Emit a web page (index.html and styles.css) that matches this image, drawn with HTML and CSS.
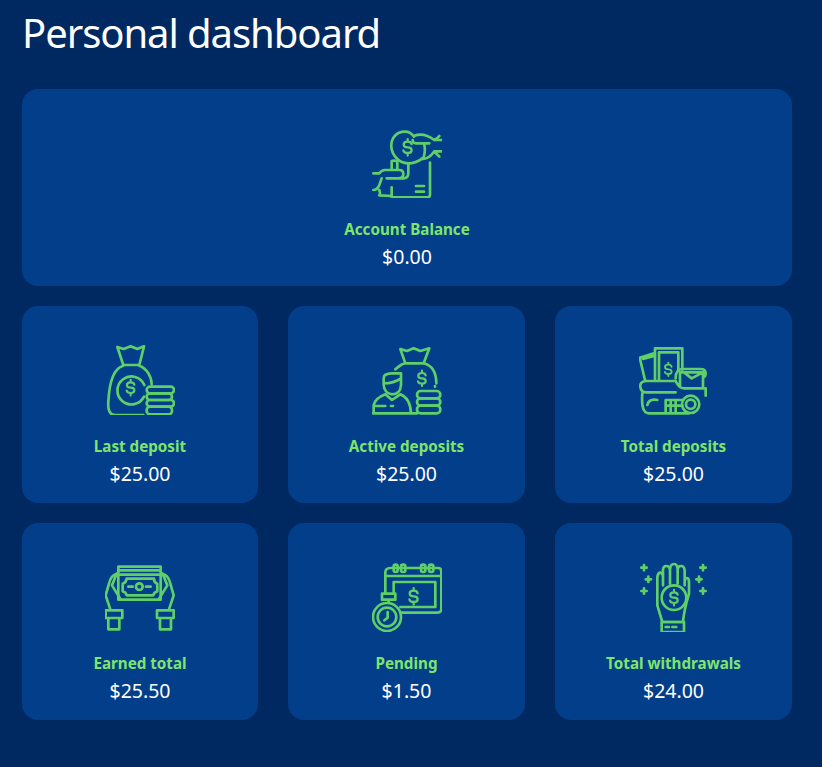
FILE: index.html
```html
<!DOCTYPE html>
<html lang="en">
<head>
<meta charset="utf-8">
<title>Personal dashboard</title>
<link rel="stylesheet" href="styles.css">
</head>
<body>
<svg class="defs" width="0" height="0" aria-hidden="true"><defs>
<path id="d" d="M14-11Q12-20 0-20Q-14-20-14-10Q-14 0 0 0Q14 0 14 10Q14 20 0 20Q-13 20-15 11M0-20V-29M0 20V29"/>
</defs></svg>
<main class="page">
<h1 class="title">Personal dashboard</h1>
<section class="grid">
<article class="card card-wide">
<svg class="icon" viewBox="96 54 210 210"><path d="M222 80C205 55 165 62 155 95C148 130 175 160 205 160C222 160 238 152 248 145"/><use href="#d" transform="translate(203 112) scale(.85)"/><path d="M222 78Q250 66 283 90H304M283 90Q292 86 298 78M304 124H283M283 124Q290 132 298 140M283 124Q265 150 245 146M218 90Q218 100 228 100H268M252 100Q258 122 250 145"/><path d="M155 178V153Q165 150 172 155V180M155 232V262H262Q270 262 270 254V158M205 160V190Q205 205 190 205H140M100 190H118Q125 180 135 180H178Q190 180 190 192Q190 205 175 205M125 205L118 225Q112 240 100 240M118 240Q122 252 118 256L155 258M228 228H252M228 245H252"/></svg>
<h2 class="label">Account Balance</h2>
<p class="value">$0.00</p>
</article>
<article class="card">
<svg class="icon" viewBox="45 30 210 210"><path d="M82 36L101 42L122 34L142 42L162 34L148 90H100ZM100 92C70 100 58 140 55 200Q52 240 75 240H160M148 92C170 100 185 125 185 148"/><path d="M162 185A42 42 0 1 1 163 150"/><use href="#d" transform="translate(122 158) scale(.8)"/><rect x="170" y="155" width="82" height="20" rx="10"/><rect x="170" y="175" width="76" height="20" rx="10"/><rect x="170" y="195" width="82" height="20" rx="10"/><rect x="170" y="215" width="76" height="23" rx="10"/></svg>
<h2 class="label">Last deposit</h2>
<p class="value">$25.00</p>
</article>
<article class="card">
<svg class="icon" viewBox="35 30 210 210"><path d="M120 42L140 48L160 40L180 48L207 40L190 85H135ZM105 103Q125 85 135 85H190Q228 95 228 145M224 153V155"/><use href="#d" transform="translate(185 130) scale(.8)"/><rect x="170" y="168" width="70" height="22" rx="11"/><rect x="170" y="190" width="70" height="22" rx="11"/><rect x="170" y="212" width="70" height="23" rx="11"/><path d="M70 130Q70 115 95 115H122V150Q120 178 95 178Q72 175 70 150ZM70 145Q100 145 122 130M40 235V210Q45 190 75 178L95 195L120 178Q150 190 152 235M38 235H170M40 213H75M92 213H98"/></svg>
<h2 class="label">Active deposits</h2>
<p class="value">$25.00</p>
</article>
<article class="card">
<svg class="icon" viewBox="40 30 210 210"><path d="M58 135L42 68L85 55M52 72L88 62M88 135V40H170V104M100 135V52H158V104"/><use href="#d" transform="translate(128 103) scale(.7)"/><path d="M150 130Q150 102 170 102H225Q240 102 240 115Q240 125 232 128M163 155V112H232V160M175 112L198 130L232 112M60 138H150Q160 160 175 160H240V182"/><path d="M60 138Q42 140 44 156Q46 172 62 172H150M50 175Q45 235 70 235H190M95 195Q70 190 65 210M120 195H172M120 212H170M120 232V195M135 232V195M150 232V195"/><circle cx="195" cy="208" r="26"/><circle cx="195" cy="208" r="14"/></svg>
<h2 class="label">Total deposits</h2>
<p class="value">$25.00</p>
</article>
<article class="card">
<svg class="icon" viewBox="45 30 210 210"><path d="M85 68V44H212V68M85 55H212"/><rect x="85" y="68" width="127" height="75"/><path d="M110 80H192Q192 92 202 95V118Q192 120 190 130H110Q108 120 98 118V95Q108 92 110 80Z"/><circle cx="148" cy="104" r="10"/><path d="M115 104H128M168 104H182"/><path d="M80 65Q62 70 57 95L47 130L62 175M80 65L66 100L92 142M47 175H97V198H47ZM55 198H88V232H55Z"/><path d="M218 65Q236 70 241 95L251 130L236 175M218 65L232 100L206 142M251 175H201V198H251ZM243 198H210V232H243Z"/></svg>
<h2 class="label">Earned total</h2>
<p class="value">$25.50</p>
</article>
<article class="card">
<svg class="icon" viewBox="35 30 210 210"><path d="M75 125V62Q75 48 90 48H235Q243 48 243 60V170Q243 182 230 182H120M78 72H243"/><rect x="100" y="38" width="12" height="22" rx="6"/><rect x="122" y="38" width="13" height="22" rx="6"/><rect x="182" y="38" width="13" height="22" rx="6"/><rect x="206" y="38" width="13" height="22" rx="6"/><path d="M100 125V90H225V165H120"/><use href="#d" transform="translate(160 133) scale(.85)"/><circle cx="80" cy="195" r="42"/><circle cx="80" cy="195" r="28"/><path d="M65 125H105V143H65ZM85 143V153M82 180V197L72 205"/></svg>
<h2 class="label">Pending</h2>
<p class="value">$1.50</p>
</article>
<article class="card">
<svg class="icon" viewBox="40 30 210 210"><path d="M112 100V55Q112 42 122 42Q132 42 133 55V95M133 55Q133 36 145 36Q156 36 156 55V95M156 55Q156 42 166 42Q176 42 177 55V100M177 90Q178 78 183 78Q190 78 190 90V125Q175 175 172 210H110L95 160V75Q97 62 105 62Q112 64 112 75"/><circle cx="145" cy="137" r="37"/><use href="#d" transform="translate(145 137) scale(.8)"/><path d="M108 210H175V240H108ZM120 225H130M140 225H152"/><path d="M47 47H63M55 39V55M60 82H76M68 74V90M47 117H63M55 109V125M224 47H240M232 39V55M212 82H228M220 74V90M224 117H240M232 109V125"/></svg>
<h2 class="label">Total withdrawals</h2>
<p class="value">$24.00</p>
</article>
</section>
</main>
</body>
</html>
```
FILE: styles.css
```css
html, body {
  margin: 0;
  padding: 0;
  height: 100%;
}
body {
  background: #002861;
  font-family: "Noto Sans", "Open Sans", sans-serif;
  color: #fff;
}
.defs {
  position: absolute;
}
.page {
  padding: 8px 30px 47px 22px;
}
.title {
  margin: 0 0 31px;
  font-size: 40px;
  line-height: 50px;
  font-weight: 400;
  letter-spacing: -1.05px;
}
.grid {
  display: grid;
  grid-template-columns: 236px 1fr 1fr;
  gap: 20px 30px;
}
.card {
  height: 197px;
  box-sizing: border-box;
  padding-top: 39px;
  background: #033e8b;
  border-radius: 16px;
  display: flex;
  flex-direction: column;
  align-items: center;
}
.card-wide {
  grid-column: 1 / -1;
}
.icon {
  width: 70px;
  height: 70px;
  flex: none;
  fill: none;
  stroke: #5fd068;
  stroke-width: 8;
  stroke-linecap: round;
  stroke-linejoin: round;
}
.label {
  margin: 21px 0 0;
  font-size: 15.2px;
  line-height: 20px;
  font-weight: 700;
  color: #7fe56a;
}
.value {
  margin: 4px 0 0;
  font-size: 19.5px;
  line-height: 28px;
  font-weight: 400;
}
```
